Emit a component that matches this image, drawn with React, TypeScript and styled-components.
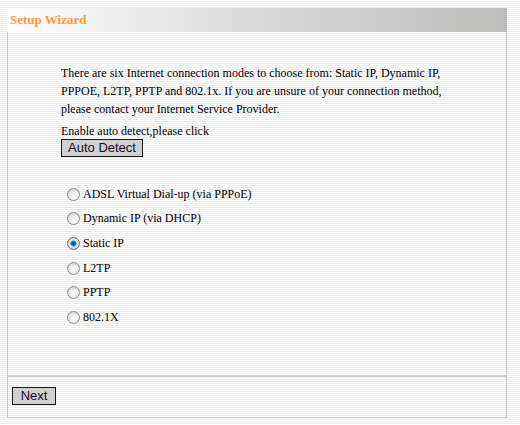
import React, { useState } from 'react';
import styled, { createGlobalStyle } from 'styled-components';

const GlobalStyle = createGlobalStyle`
  html, body {
    margin: 0;
    padding: 0;
  }
  body {
    background: repeating-linear-gradient(
      to bottom,
      #ffffff 0px,
      #ffffff 1px,
      #ececec 1px,
      #ececec 2px
    );
    min-height: 425px;
    font-family: 'Liberation Serif', 'Times New Roman', serif;
  }
`;

const Page = styled.div`
  padding: 8px 0 0 7px;
`;

const Panel = styled.div`
  width: 500px;
`;

const TitleBar = styled.div`
  height: 24px;
  display: flex;
  align-items: center;
  padding-left: 3px;
  background: linear-gradient(to right, #ffffff 0%, #d9d9d9 50%, #bdbdbc 100%);
`;

const Title = styled.h1`
  margin: 0;
  font-family: 'Liberation Serif', 'Times New Roman', serif;
  font-size: 13px;
  font-weight: bold;
  color: #ff9933;
`;

const Body = styled.div`
  height: 311px;
  padding: 32px 0 0 53px;
  border-left: 1px solid #c8c8c8;
  border-right: 1px solid #c8c8c8;
`;

const Intro = styled.p`
  margin: 0;
  width: 400px;
  font-family: 'Liberation Serif', 'Times New Roman', serif;
  font-size: 12px;
  line-height: 18px;
  color: #000;
`;

const Hint = styled.div`
  margin-top: 5px;
  font-family: 'Liberation Serif', 'Times New Roman', serif;
  font-size: 12px;
  line-height: 16px;
  color: #000;
`;

const GrayButton = styled.button<{ $width: number }>`
  display: block;
  width: ${p => p.$width}px;
  height: 18px;
  padding: 0;
  margin: 0;
  background: #d0d0d0;
  border: 1px solid #1a1a1a;
  border-radius: 0;
  font-family: 'Liberation Sans', Arial, sans-serif;
  font-size: 13px;
  line-height: 16px;
  color: #1a0a2a;
  cursor: pointer;
`;

const ModeList = styled.div`
  margin-top: 25px;
  display: flex;
  flex-direction: column;
`;

const ModeRow = styled.label`
  display: flex;
  align-items: center;
  height: 24.6px;
  font-family: 'Liberation Serif', 'Times New Roman', serif;
  font-size: 12px;
  color: #000;
  cursor: pointer;
`;

const Radio = styled.input`
  appearance: none;
  width: 13px;
  height: 13px;
  margin: 0 3px 0 6px;
  border-radius: 50%;
  border: 1px solid #8c8c8c;
  background: radial-gradient(circle at 60% 65%, #ffffff 0%, #eeeeee 40%, #c4c4c4 100%);
  box-sizing: border-box;
  cursor: pointer;

  &:checked {
    background: radial-gradient(circle at 50% 50%, #0a3d6e 0%, #1c6fb8 26%, #6fb2e6 38%, #e4e4e4 46%, #cccccc 100%);
    border-color: #6a6a6a;
  }
`;

const Footer = styled.div`
  height: 30px;
  padding: 10px 0 0 4px;
  border: 1px solid #c8c8c8;
  border-top: 2px solid #cfcfcf;
`;

const modes = [
  'ADSL Virtual Dial-up (via PPPoE)',
  'Dynamic IP (via DHCP)',
  'Static IP',
  'L2TP',
  'PPTP',
  '802.1X',
];

const App: React.FC = () => {
  const [mode, setMode] = useState('Static IP');

  return (
    <Page>
      <GlobalStyle />
      <Panel>
        <TitleBar>
          <Title>Setup Wizard</Title>
        </TitleBar>
        <Body>
          <Intro>
            There are six Internet connection modes to choose from: Static IP, Dynamic IP,
            PPPOE, L2TP, PPTP and 802.1x. If you are unsure of your connection method,
            please contact your Internet Service Provider.
          </Intro>
          <Hint>Enable auto detect,please click</Hint>
          <GrayButton $width={82}>Auto Detect</GrayButton>
          <ModeList>
            {modes.map(m => (
              <ModeRow key={m}>
                <Radio
                  type="radio"
                  name="mode"
                  checked={mode === m}
                  onChange={() => setMode(m)}
                />
                {m}
              </ModeRow>
            ))}
          </ModeList>
        </Body>
        <Footer>
          <GrayButton $width={44}>Next</GrayButton>
        </Footer>
      </Panel>
    </Page>
  );
};

export default App;
